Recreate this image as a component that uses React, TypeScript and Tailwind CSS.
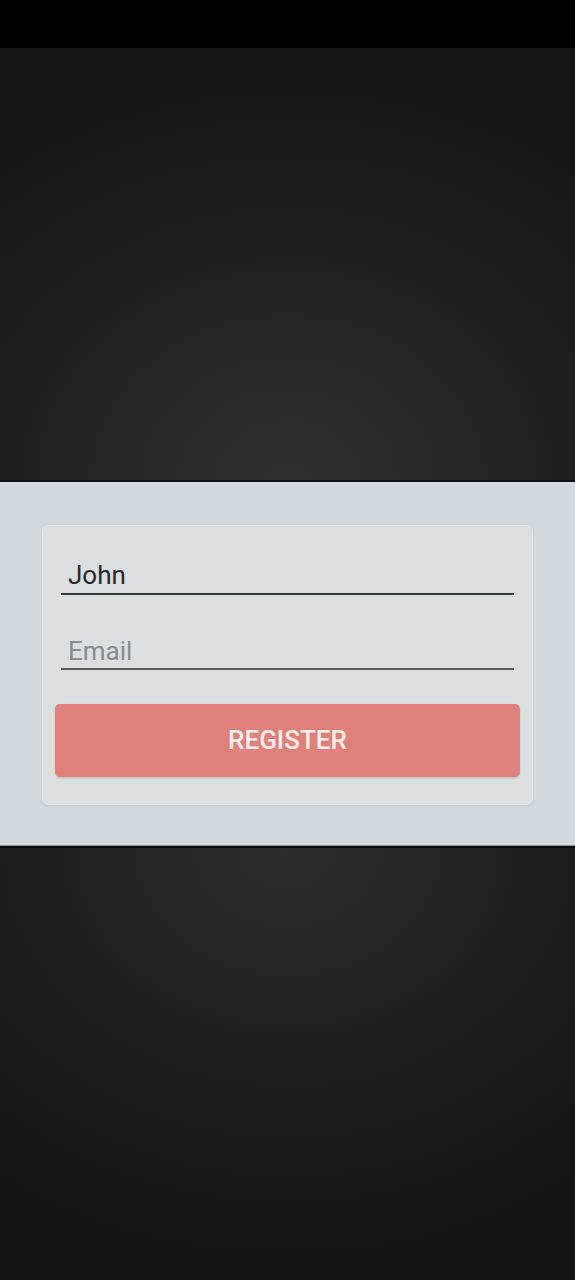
export default function App() {
  return (
    <div className="flex h-[1280px] w-full flex-col bg-black font-['Roboto',sans-serif]">
      <div className="h-[48px] shrink-0 bg-black" />
      <div className="h-[432px] shrink-0 bg-[radial-gradient(ellipse_90%_100%_at_50%_100%,#303030_0%,#222222_45%,#141414_100%)]" />
      <div className="h-[2px] shrink-0 bg-[#0c0e12]" />
      <div className="flex h-[363px] shrink-0 flex-col bg-[#d1d9df] px-[42px] pt-[43px]">
        <div className="flex h-[280px] flex-col rounded-md border border-[#e2e6e9] bg-[#dcdfe2] px-[12px] pt-[33px] shadow-[0_1px_3px_rgba(0,0,0,0.08)]">
          <div className="mx-[6px] border-b-2 border-[#2e373c] pb-[2px]">
            <input
              defaultValue="John"
              className="w-full bg-transparent px-[7px] text-[26px] leading-[32px] text-[#262626] outline-none"
            />
          </div>
          <div className="mx-[6px] mt-[40px] border-b-2 border-[#545a5f] pb-[1px]">
            <input
              placeholder="Email"
              className="w-full bg-transparent px-[7px] text-[26px] leading-[32px] text-[#262626] outline-none placeholder:text-[#868c92]"
            />
          </div>
          <button className="mt-[34px] h-[73px] w-full rounded-[5px] bg-[#df807a] text-[26px] font-medium text-[#fbeeec] shadow-[0_1px_2px_rgba(0,0,0,0.15)]">
            REGISTER
          </button>
        </div>
      </div>
      <div className="h-[1px] shrink-0 bg-[#8d959a]" />
      <div className="h-[2px] shrink-0 bg-[#0e1012]" />
      <div className="flex-1 bg-[radial-gradient(ellipse_90%_100%_at_50%_0%,#2c2c2c_0%,#202020_45%,#121212_100%)]" />
    </div>
  );
}
